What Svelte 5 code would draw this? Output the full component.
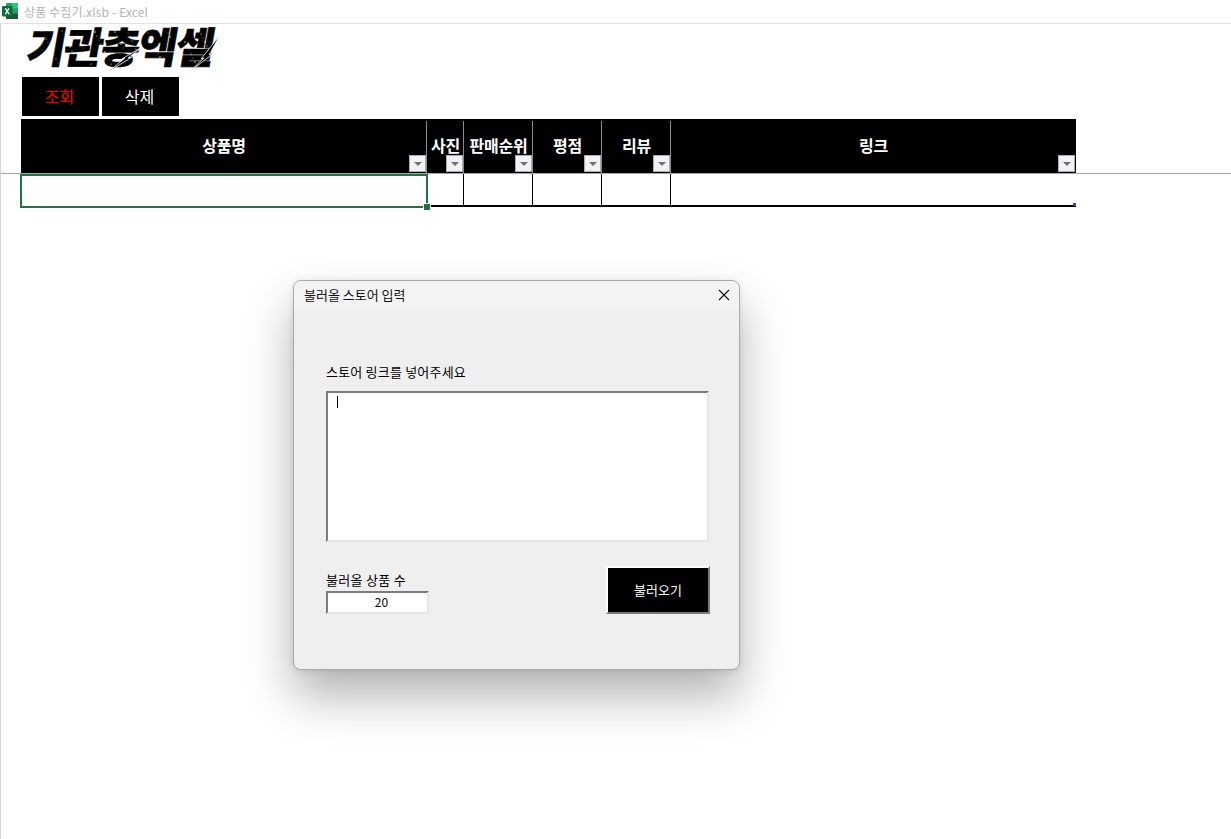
<script>
  const columns = [
    { name: '상품명', width: 406 },
    { name: '사진', width: 37 },
    { name: '판매순위', width: 69 },
    { name: '평점', width: 69 },
    { name: '리뷰', width: 69 },
    { name: '링크', width: 405 }
  ];
  // worn-ink specks over the logo, deterministic
  const specks = Array.from({ length: 90 }, (_, i) => ({
    x: 3 + ((i * 47) % 190),
    y: 4 + ((i * 29) % 40),
    r: 0.35 + ((i * 13) % 5) / 12
  }));
</script>

<div class="page">
  <header class="titlebar">
    <svg class="xl" viewBox="0 0 18 18" width="18" height="18" aria-hidden="true">
      <rect x="5" y="1" width="12" height="16" rx="1" fill="#21a366" />
      <rect x="11" y="1" width="6" height="5.4" fill="#33c481" />
      <rect x="5" y="6.4" width="6" height="5.2" fill="#107c41" />
      <rect x="11" y="11.6" width="6" height="5.4" fill="#185c37" />
      <rect x="5" y="11.6" width="6" height="5.4" fill="#185c37" />
      <rect x="1" y="4" width="10.5" height="10.5" rx="1" fill="#0f6b3a" />
      <path d="M3.6 6.2h1.6l1 1.9 1-1.9h1.5L7 9.2l1.8 3H7.2L6.2 10.2l-1 2H3.6l1.8-3z" fill="#fff" />
    </svg>
    <span>상품 수집기.xlsb - Excel</span>
  </header>

  <section class="frozen">
    <div class="logo">
      <span class="logo-text">기관총엑셀</span>
      <svg class="slashes" viewBox="0 0 200 50" width="200" height="50" aria-hidden="true">
        {#each specks as s}
          <circle cx={s.x} cy={s.y} r={s.r} fill="#fff" />
        {/each}
        <path d="M82 46 L99 32 L96 33 L116 21 L102 32 L106 31 Z" fill="#000" stroke="#fff" stroke-width="0.8" />
        <path d="M163 46 L178 32 L175 33 L194 9 L183 29 L188 27 Z" fill="#000" stroke="#fff" stroke-width="0.8" />
      </svg>
    </div>
    <div class="actions">
      <button class="action red">조회</button>
      <button class="action">삭제</button>
    </div>
    <div class="head">
      {#each columns as col}
        <div class="hcell" style="width:{col.width}px">
          <span>{col.name}</span>
          <i class="filter"><b></b></i>
        </div>
      {/each}
    </div>
  </section>

  <section class="row">
    {#each columns as col}
      <div class="cell" style="width:{col.width}px"></div>
    {/each}
    <div class="selection"><i></i></div>
    <i class="corner"></i>
  </section>

  <div class="dialog">
    <div class="dialog-title">
      <span>불러올 스토어 입력</span>
      <svg viewBox="0 0 12 12" width="12" height="12" aria-hidden="true">
        <path d="M1 1 L11 11 M11 1 L1 11" stroke="#111" stroke-width="1.1" fill="none" />
      </svg>
    </div>
    <div class="dialog-body">
      <label class="lbl wide" for="store">스토어 링크를 넣어주세요</label>
      <div class="area" id="store"><i class="caret"></i></div>
      <div class="bottom">
        <div class="count">
          <div class="lbl small">불러올 상품 수</div>
          <div class="num">20</div>
        </div>
        <button class="load">불러오기</button>
      </div>
    </div>
  </div>
</div>

<style>
  :global(body) {
    margin: 0;
    background: #fff;
  }
  .page {
    position: relative;
    width: 1231px;
    height: 839px;
    overflow: hidden;
    background: #fff;
    font-family: "Noto Sans CJK KR", "Noto Sans", sans-serif;
    color: #000;
  }
  .page::before {
    content: "";
    position: absolute;
    left: 0;
    top: 24px;
    bottom: 0;
    width: 1px;
    background: #d4d4d4;
  }
  .titlebar {
    height: 23px;
    border-bottom: 1px solid #e2e2e2;
    display: flex;
    align-items: center;
    gap: 5px;
    padding-left: 1px;
    font-size: 12px;
    letter-spacing: 0.14px;
    color: #b4b4b4;
    box-sizing: content-box;
  }
  .xl {
    flex: none;
    margin-top: -2px;
  }
  .frozen {
    height: 149px;
    border-bottom: 1px solid #a6a6a6;
    box-sizing: content-box;
    padding-left: 21px;
  }
  .logo {
    position: relative;
    height: 53px;
    width: 220px;
  }
  .logo-text {
    position: absolute;
    left: 7px;
    top: -9px;
    font-size: 42px;
    line-height: 60px;
    font-weight: 900;
    letter-spacing: -1.5px;
    white-space: nowrap;
    transform: skewX(-10deg);
    -webkit-text-stroke: 0.6px #000;
  }
  .slashes {
    position: absolute;
    left: 5px;
    top: 2px;
  }
  .actions {
    display: flex;
    gap: 3px;
    padding-left: 1px;
    height: 39px;
  }
  .action {
    width: 77px;
    height: 39px;
    border: 0;
    padding: 0 2px 2px 0;
    background: #000;
    color: #fff;
    font: 400 16px "Noto Sans CJK KR", sans-serif;
  }
  .action.red {
    color: #ff0000;
  }
  .head {
    display: flex;
    margin-top: 3px;
    height: 54px;
    width: 1055px;
    background: #000;
  }
  .hcell {
    position: relative;
    box-sizing: border-box;
    display: flex;
    justify-content: center;
    padding-top: 16px;
    color: #fff;
    font-size: 16px;
    font-weight: 700;
    line-height: 20px;
    letter-spacing: -0.2px;
    white-space: nowrap;
  }
  .hcell:not(:last-child)::after {
    content: "";
    position: absolute;
    right: 0;
    top: 2px;
    bottom: 0;
    width: 1px;
    background: #8a8a8a;
    z-index: 1;
  }
  .filter {
    position: absolute;
    right: 1px;
    bottom: 1px;
    width: 17px;
    height: 17px;
    box-sizing: border-box;
    background: #f1f2f6;
    border: 1px solid #a9abb0;
    display: flex;
    align-items: center;
    justify-content: center;
    z-index: 2;
  }
  .filter b {
    width: 0;
    height: 0;
    border-left: 4px solid transparent;
    border-right: 4px solid transparent;
    border-top: 4px solid #6f7075;
  }
  .row {
    position: relative;
    display: flex;
    margin-left: 21px;
    width: 1055px;
    height: 33px;
    box-sizing: border-box;
    border-bottom: 2px solid #000;
  }
  .cell {
    box-sizing: border-box;
    border-right: 1px solid #000;
  }
  .cell:nth-child(6) {
    border-right: 0;
  }
  .selection {
    position: absolute;
    left: -1px;
    top: 0;
    width: 408px;
    height: 34px;
    box-sizing: border-box;
    border: 2px solid #217346;
    background: #fff;
  }
  .selection i {
    position: absolute;
    right: -4px;
    bottom: -4px;
    width: 6px;
    height: 6px;
    background: #217346;
    border: 1px solid #fff;
    box-sizing: content-box;
    margin: -1px;
  }
  .corner {
    position: absolute;
    right: 0;
    bottom: -1px;
    width: 3px;
    height: 3px;
    background: #3f48a8;
  }
  .dialog {
    position: absolute;
    left: 293px;
    top: 280px;
    width: 447px;
    height: 390px;
    box-sizing: border-box;
    background: #efefef;
    border: 1px solid #a9a9a9;
    border-radius: 8px;
    box-shadow: 0 26px 48px rgba(0, 0, 0, 0.3), 0 1px 6px rgba(0, 0, 0, 0.1);
    overflow: hidden;
  }
  .dialog-title {
    height: 29px;
    padding: 0 9px 2px 10px;
    box-sizing: border-box;
    background: #f3f3f3;
    display: flex;
    align-items: center;
    justify-content: space-between;
    font-size: 13px;
    color: #111;
  }
  .dialog-body {
    padding: 53px 29px 0 32px;
    display: flex;
    flex-direction: column;
  }
  .lbl {
    display: block;
    font-size: 13px;
    line-height: 18px;
    height: 18px;
  }
  .wide {
    letter-spacing: 0.2px;
  }
  .area {
    position: relative;
    margin: 10px 1px 0 0;
    height: 151px;
    box-sizing: border-box;
    background: #fff;
    border: 2px solid;
    border-color: #7b7b7b #e6e6e6 #e6e6e6 #7b7b7b;
  }
  .caret {
    position: absolute;
    left: 9px;
    top: 3px;
    width: 1px;
    height: 12px;
    background: #000;
  }
  .bottom {
    display: flex;
    justify-content: space-between;
    align-items: flex-start;
    margin-top: 25px;
  }
  .count {
    padding-top: 4px;
    width: 103px;
  }
  .small {
    height: 20px;
    letter-spacing: 0.3px;
  }
  .num {
    height: 23px;
    box-sizing: border-box;
    background: #fff;
    border: 2px solid;
    border-color: #7b7b7b #e6e6e6 #e6e6e6 #7b7b7b;
    padding-left: 8px;
    text-align: center;
    font-size: 12px;
    line-height: 17px;
  }
  .load {
    width: 104px;
    height: 48px;
    margin-top: -1px;
    box-sizing: border-box;
    background: #000;
    color: #fff;
    border: 2px solid;
    border-color: #fff #7b7b7b #7b7b7b #fff;
    font: 400 13px "Noto Sans CJK KR", sans-serif;
    padding: 0 0 2px;
  }
</style>
